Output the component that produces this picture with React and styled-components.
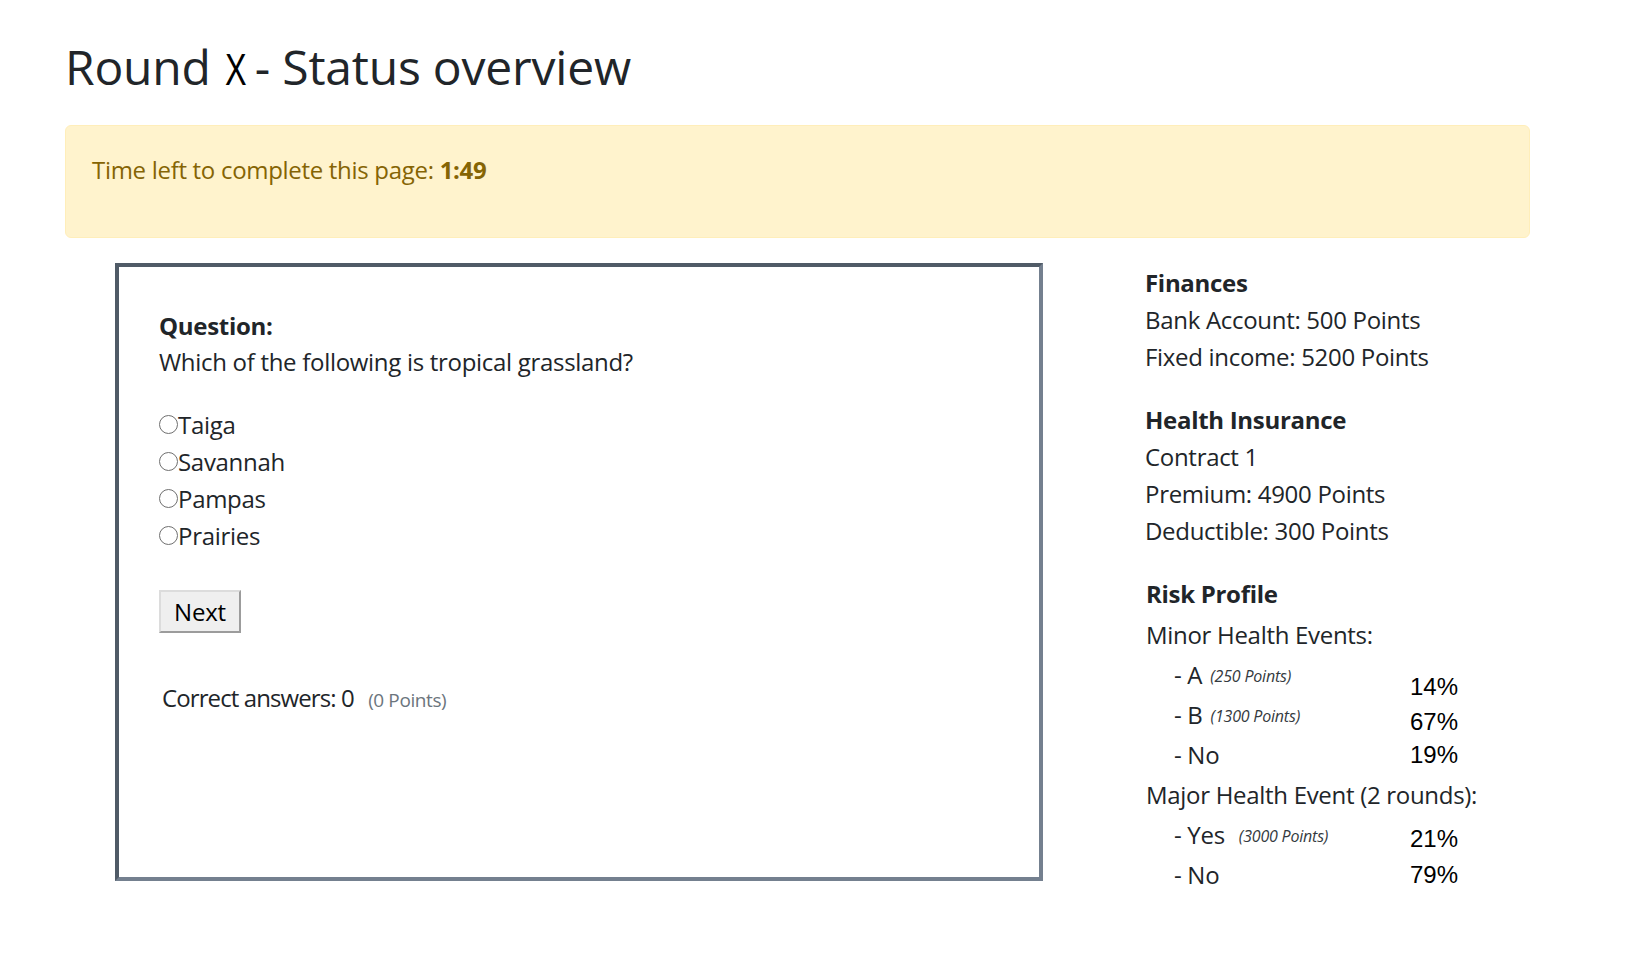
import styled, { createGlobalStyle } from "styled-components";

const GlobalStyle = createGlobalStyle`
  body {
    margin: 0;
    background: #fff;
    color: #212529;
    font-family: "Open Sans", "Noto Sans", sans-serif;
    font-size: 24px;
    line-height: 1.5;
    letter-spacing: -0.3px;
  }
`;

const Page = styled.div`
  padding: 31px 96px 40px 65px;
`;

const Title = styled.h1`
  margin: 0 0 19px 0;
  font-size: 48px;
  font-weight: 400;
  line-height: 72px;
  letter-spacing: -0.2px;
`;

const NarrowX = styled.span`
  display: inline-block;
  width: 22px;
  margin: 0 8px 0 14px;
  font-family: "Liberation Sans", Arial, sans-serif;
  font-size: 45px;
  transform: scaleX(0.72);
  transform-origin: left center;
  color: #000;
`;

const Alert = styled.div`
  background: #fff3cd;
  border: 1.5px solid #ffeeba;
  border-radius: 6px;
  color: #856404;
  padding: 26px 26px 49px;
  line-height: 36px;

  b {
    font-weight: 700;
  }
`;

const Row = styled.div`
  display: flex;
  align-items: flex-start;
  margin-top: 25px;
`;

const QuestionBox = styled.div`
  margin-left: 50px;
  width: 928px;
  height: 618px;
  box-sizing: border-box;
  border: 4px solid;
  border-color: #505b67 #74808f #74808f #505b67;
  padding: 41px 40px;
`;

const Label = styled.div`
  font-weight: 700;
  line-height: 36px;
`;

const QuestionText = styled.div`
  line-height: 36px;
  margin-bottom: 26px;
`;

const Options = styled.div`
  display: flex;
  flex-direction: column;
`;

const Option = styled.label`
  display: flex;
  align-items: center;
  height: 37px;
`;

const Radio = styled.input`
  appearance: none;
  width: 19px;
  height: 19px;
  margin: 0;
  border: 1.5px solid #6f6f6f;
  border-radius: 50%;
  background: #fff;
  box-sizing: border-box;
`;

const Button = styled.button`
  margin-top: 36px;
  width: 82px;
  height: 43px;
  box-sizing: border-box;
  background: #efefef;
  border: 2px solid;
  border-color: #dcdcdc #9c9c9c #9c9c9c #dcdcdc;
  font-family: inherit;
  font-size: 24px;
  letter-spacing: -0.2px;
  color: #000;
  padding: 0;
`;

const Score = styled.div`
  margin-top: 47px;
  padding-left: 3px;
  line-height: 36px;
  letter-spacing: -0.9px;
`;

const Muted = styled.span`
  color: #6c757d;
  font-size: 19px;
  margin-left: 9px;
  letter-spacing: -0.4px;
`;

const Side = styled.div`
  margin-left: 102px;
  padding-top: 2px;
`;

const Section = styled.div`
  margin-bottom: 27px;
`;

const Heading = styled.div`
  font-weight: 700;
  line-height: 36px;
  margin-left: ${(p) => p.$indent || 0}px;
  margin-bottom: ${(p) => p.$after || 0}px;
`;

const Line = styled.div`
  line-height: 37px;
`;

const RiskLine = styled.div`
  line-height: 40px;
  margin-left: 1px;
`;

const RiskRow = styled.div`
  display: grid;
  grid-template-columns: 236px auto;
  padding-left: 29px;
  height: 40px;
  align-items: center;
`;

const RiskLabel = styled.div`
  line-height: 40px;
  white-space: nowrap;
`;

const Pts = styled.small`
  font-style: italic;
  font-size: 16px;
  color: #343a40;
  margin-left: ${(p) => p.$gap || 8}px;
  letter-spacing: -0.2px;
  position: relative;
  top: -2px;
`;

const Pct = styled.div`
  font-family: "Liberation Sans", Arial, sans-serif;
  font-size: 24px;
  letter-spacing: 0;
  color: #000;
  position: relative;
  top: ${(p) => p.$drop || 0}px;
`;

const minor = [
  { label: "A", pts: "(250 Points)", pct: "14%", drop: 10 },
  { label: "B", pts: "(1300 Points)", pct: "67%", drop: 5 },
  { label: "No", pct: "19%", drop: 0 },
];

const major = [
  { label: "Yes", pts: "(3000 Points)", pct: "21%", drop: 2, gap: 14 },
  { label: "No", pct: "79%", drop: 0 },
];

const answers = ["Taiga", "Savannah", "Pampas", "Prairies"];

const RiskItem = ({ item }) => (
  <RiskRow>
    <RiskLabel>
      - {item.label}
      {item.pts && <Pts $gap={item.gap}>{item.pts}</Pts>}
    </RiskLabel>
    <Pct $drop={item.drop}>{item.pct}</Pct>
  </RiskRow>
);

export default function App() {
  return (
    <>
      <GlobalStyle />
      <Page>
        <Title>
          Round<NarrowX>X</NarrowX>- Status overview
        </Title>
        <Alert>
          Time left to complete this page: <b>1:49</b>
        </Alert>
        <Row>
          <QuestionBox>
            <Label>Question:</Label>
            <QuestionText>Which of the following is tropical grassland?</QuestionText>
            <Options>
              {answers.map((a) => (
                <Option key={a}>
                  <Radio type="radio" name="answer" value={a} />
                  {a}
                </Option>
              ))}
            </Options>
            <Button>Next</Button>
            <Score>
              Correct answers: 0 <Muted>(0 Points)</Muted>
            </Score>
          </QuestionBox>
          <Side>
            <Section>
              <Heading>Finances</Heading>
              <Line>Bank Account: 500 Points</Line>
              <Line>Fixed income: 5200 Points</Line>
            </Section>
            <Section>
              <Heading>Health Insurance</Heading>
              <Line>Contract 1</Line>
              <Line>Premium: 4900 Points</Line>
              <Line>Deductible: 300 Points</Line>
            </Section>
            <Section>
              <Heading $indent={1} $after={3}>Risk Profile</Heading>
              <RiskLine>Minor Health Events:</RiskLine>
              {minor.map((m, i) => (
                <RiskItem key={i} item={m} />
              ))}
              <RiskLine>Major Health Event (2 rounds):</RiskLine>
              {major.map((m, i) => (
                <RiskItem key={i} item={m} />
              ))}
            </Section>
          </Side>
        </Row>
      </Page>
    </>
  );
}
